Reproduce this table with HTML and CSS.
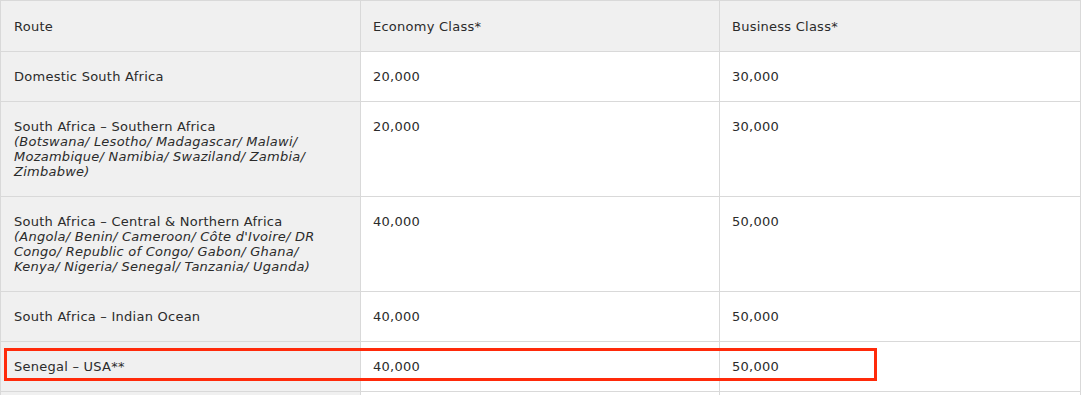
FILE: index.html
```html
<!DOCTYPE html>
<html lang="en">
<head>
<meta charset="utf-8">
<title>Award chart</title>
<link rel="stylesheet" href="styles.css">
</head>
<body>
<div class="wrap">
  <table class="chart">
    <colgroup>
      <col class="c1"><col class="c2"><col class="c3">
    </colgroup>
    <thead>
      <tr><th class="route">Route</th><th>Economy Class*</th><th>Business Class*</th></tr>
    </thead>
    <tbody>
      <tr><td class="route">Domestic South Africa</td><td>20,000</td><td>30,000</td></tr>
      <tr><td class="route">South Africa – Southern Africa<br><em>(Botswana/ Lesotho/ Madagascar/ Malawi/ Mozambique/ Namibia/ Swaziland/ Zambia/ Zimbabwe)</em></td><td>20,000</td><td>30,000</td></tr>
      <tr><td class="route">South Africa – Central &amp; Northern Africa<br><em>(Angola/ Benin/ Cameroon/ Côte d'Ivoire/ DR Congo/ Republic of Congo/ Gabon/ Ghana/ Kenya/ Nigeria/ Senegal/ Tanzania/ Uganda)</em></td><td>40,000</td><td>50,000</td></tr>
      <tr><td class="route">South Africa – Indian Ocean</td><td>40,000</td><td>50,000</td></tr>
      <tr><td class="route">Senegal – USA**</td><td>40,000</td><td>50,000</td></tr>
      <tr><td class="route">&nbsp;</td><td>&nbsp;</td><td>&nbsp;</td></tr>
    </tbody>
  </table>
  <div class="highlight"></div>
</div>
</body>
</html>
```
FILE: styles.css
```css
html, body {
  margin: 0;
  padding: 0;
  background: #fff;
}
.wrap {
  position: relative;
  width: 1080px;
}
.chart {
  width: 1080px;
  table-layout: fixed;
  border-collapse: collapse;
  font-family: "DejaVu Sans", sans-serif;
  font-size: 13px;
  letter-spacing: 0.25px;
  line-height: 15px;
  color: #2b2b2b;
}
.c1 { width: 360px; }
.c2 { width: 359px; }
.c3 { width: 361px; }
.chart th,
.chart td {
  border: 1px solid #d9d9d9;
  padding: 17px 13px 17px 12px;
  text-align: left;
  vertical-align: top;
  font-weight: normal;
}
.chart th {
  background: #f0f0f0;
  padding-top: 18px;
}
.chart .route {
  background: #f0f0f0;
  padding-left: 13px;
}
.chart em {
  font-style: italic;
}
.highlight {
  position: absolute;
  left: 4px;
  top: 348px;
  width: 867px;
  height: 27px;
  border: 3px solid #ff2a0a;
}
```
